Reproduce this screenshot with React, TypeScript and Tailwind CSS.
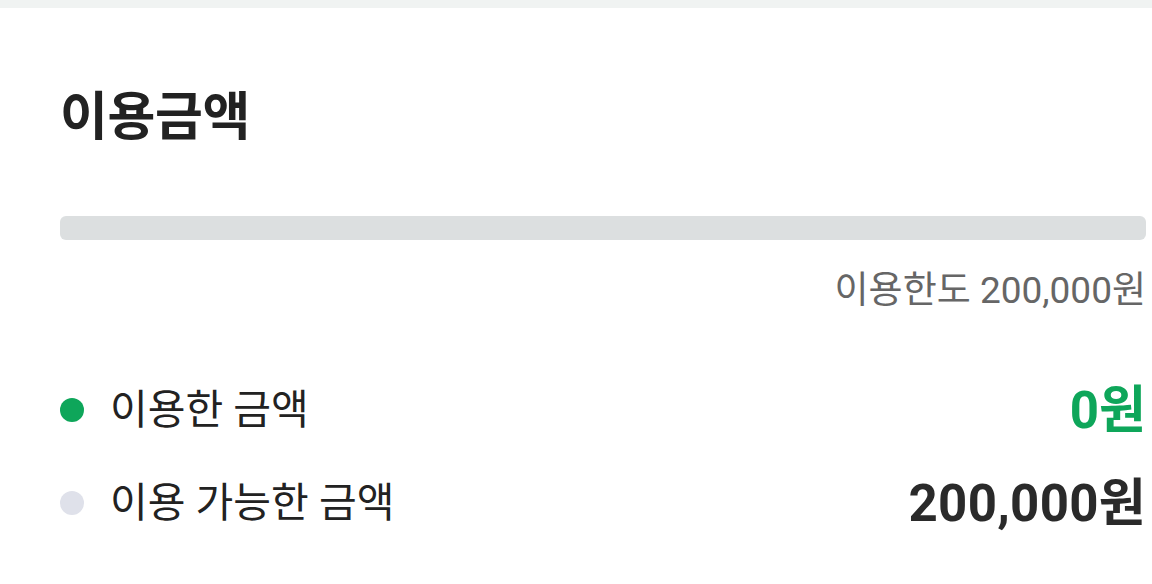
export default function App() {
  return (
    <div className="min-h-screen bg-white font-['Roboto','Noto_Sans_CJK_KR',sans-serif]">
      <div className="h-2 bg-[#f0f3f2]" />
      <section className="pl-[60px] pr-[6px] pt-[84px]">
        <h2 className="text-[52px] font-bold leading-none text-[#222] tracking-[-0.3px]">이용금액</h2>
        <div className="mt-[72px] h-6 rounded-[6px] bg-[#dcdfe0]" />
        <p className="mt-[32px] text-right text-[37px] leading-none text-[#666]">
          이용한도 200,000원
        </p>
        <div className="mt-[71px] flex flex-col gap-[33px]">
          <div className="flex h-[60px] items-center justify-between">
            <div className="flex items-center gap-[26px]">
              <span className="h-6 w-6 rounded-full bg-[#0ea65a]" />
              <span className="text-[41px] leading-none text-[#222]">이용한 금액</span>
            </div>
            <span className="text-[51px] font-bold leading-none text-[#0ea65a]">0원</span>
          </div>
          <div className="flex h-[60px] items-center justify-between">
            <div className="flex items-center gap-[26px]">
              <span className="h-6 w-6 rounded-full bg-[#dfe1ea]" />
              <span className="text-[41px] leading-none text-[#222]">이용 가능한 금액</span>
            </div>
            <span className="text-[51px] font-bold leading-none text-[#2a2a2a] tracking-[0.3px]">200,000원</span>
          </div>
        </div>
      </section>
    </div>
  );
}
